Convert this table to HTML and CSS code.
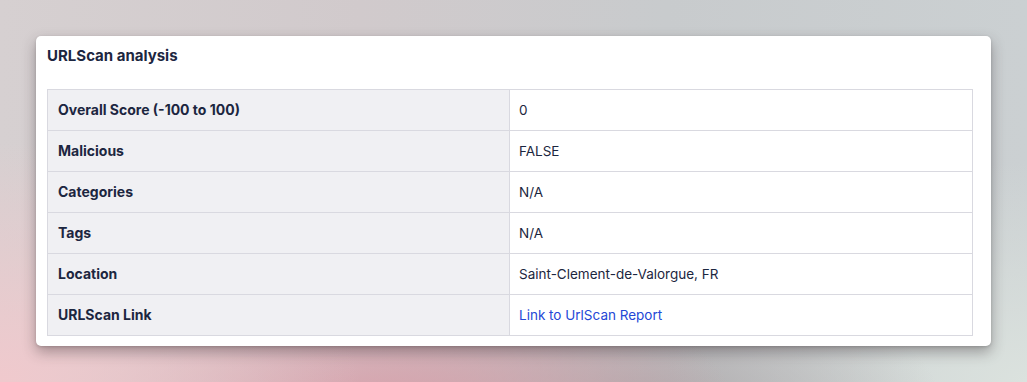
FILE: index.html
```html
<!DOCTYPE html>
<html>
<head>
<meta charset="utf-8">
<link rel="stylesheet" href="styles.css">
</head>
<body>
<div class="stage">
  <section class="card">
    <h2 class="card-title">URLScan analysis</h2>
    <table class="info">
      <tr><th>Overall Score (-100 to 100)</th><td>0</td></tr>
      <tr><th>Malicious</th><td>FALSE</td></tr>
      <tr><th>Categories</th><td>N/A</td></tr>
      <tr><th>Tags</th><td>N/A</td></tr>
      <tr><th>Location</th><td>Saint-Clement-de-Valorgue, FR</td></tr>
      <tr><th>URLScan Link</th><td><a class="link" href="#">Link to UrlScan Report</a></td></tr>
    </table>
  </section>
</div>
</body>
</html>
```

FILE: styles.css
```css
html, body {
  margin: 0;
  padding: 0;
}
body {
  width: 1027px;
  height: 382px;
  overflow: hidden;
  font-family: Inter, "Noto Sans", sans-serif;
  background:
    radial-gradient(ellipse 360px 240px at 0px 382px, #f0c9cd 0%, rgba(240,201,205,0) 100%),
    radial-gradient(ellipse 360px 160px at 380px 420px, #d89ea9 0%, rgba(216,158,169,0) 100%),
    radial-gradient(ellipse 300px 120px at 640px 400px, #aeaaac 0%, rgba(174,170,172,0) 100%),
    radial-gradient(ellipse 360px 220px at 1027px 382px, #dbe2de 0%, rgba(219,226,222,0) 100%),
    linear-gradient(90deg, #d6d0d1 0%, #d1cacc 35%, #c8cbcd 65%, #cbd0d2 100%);
}
.stage {
  padding: 36px;
}
.card {
  width: 955px;
  box-sizing: border-box;
  background: #ffffff;
  border-radius: 5px;
  padding: 10px 18px 10px 11px;
  box-shadow: 0 6px 14px rgba(50, 40, 45, 0.38), 0 1px 3px rgba(0,0,0,0.15);
}
.card-title {
  margin: 0;
  font-size: 15px;
  font-weight: 700;
  color: #1c2640;
  line-height: 20px;
  height: 43px;
}
.info {
  width: 926px;
  border-collapse: collapse;
  font-size: 14px;
  line-height: 20px;
}
.info th, .info td {
  border: 1px solid #d9d9e0;
  height: 41px;
  box-sizing: border-box;
  padding: 0 9px 0 10px;
  text-align: left;
  vertical-align: middle;
}
.info th {
  width: 462px;
  background: #f0f0f3;
  font-weight: 700;
  color: #1c2640;
}
.info td {
  padding-left: 9px;
  color: #1c2640;
  font-weight: 400;
  font-size: 13.5px;
  background: #ffffff;
}
.link {
  color: #2447d6;
  text-decoration: none;
}
```
